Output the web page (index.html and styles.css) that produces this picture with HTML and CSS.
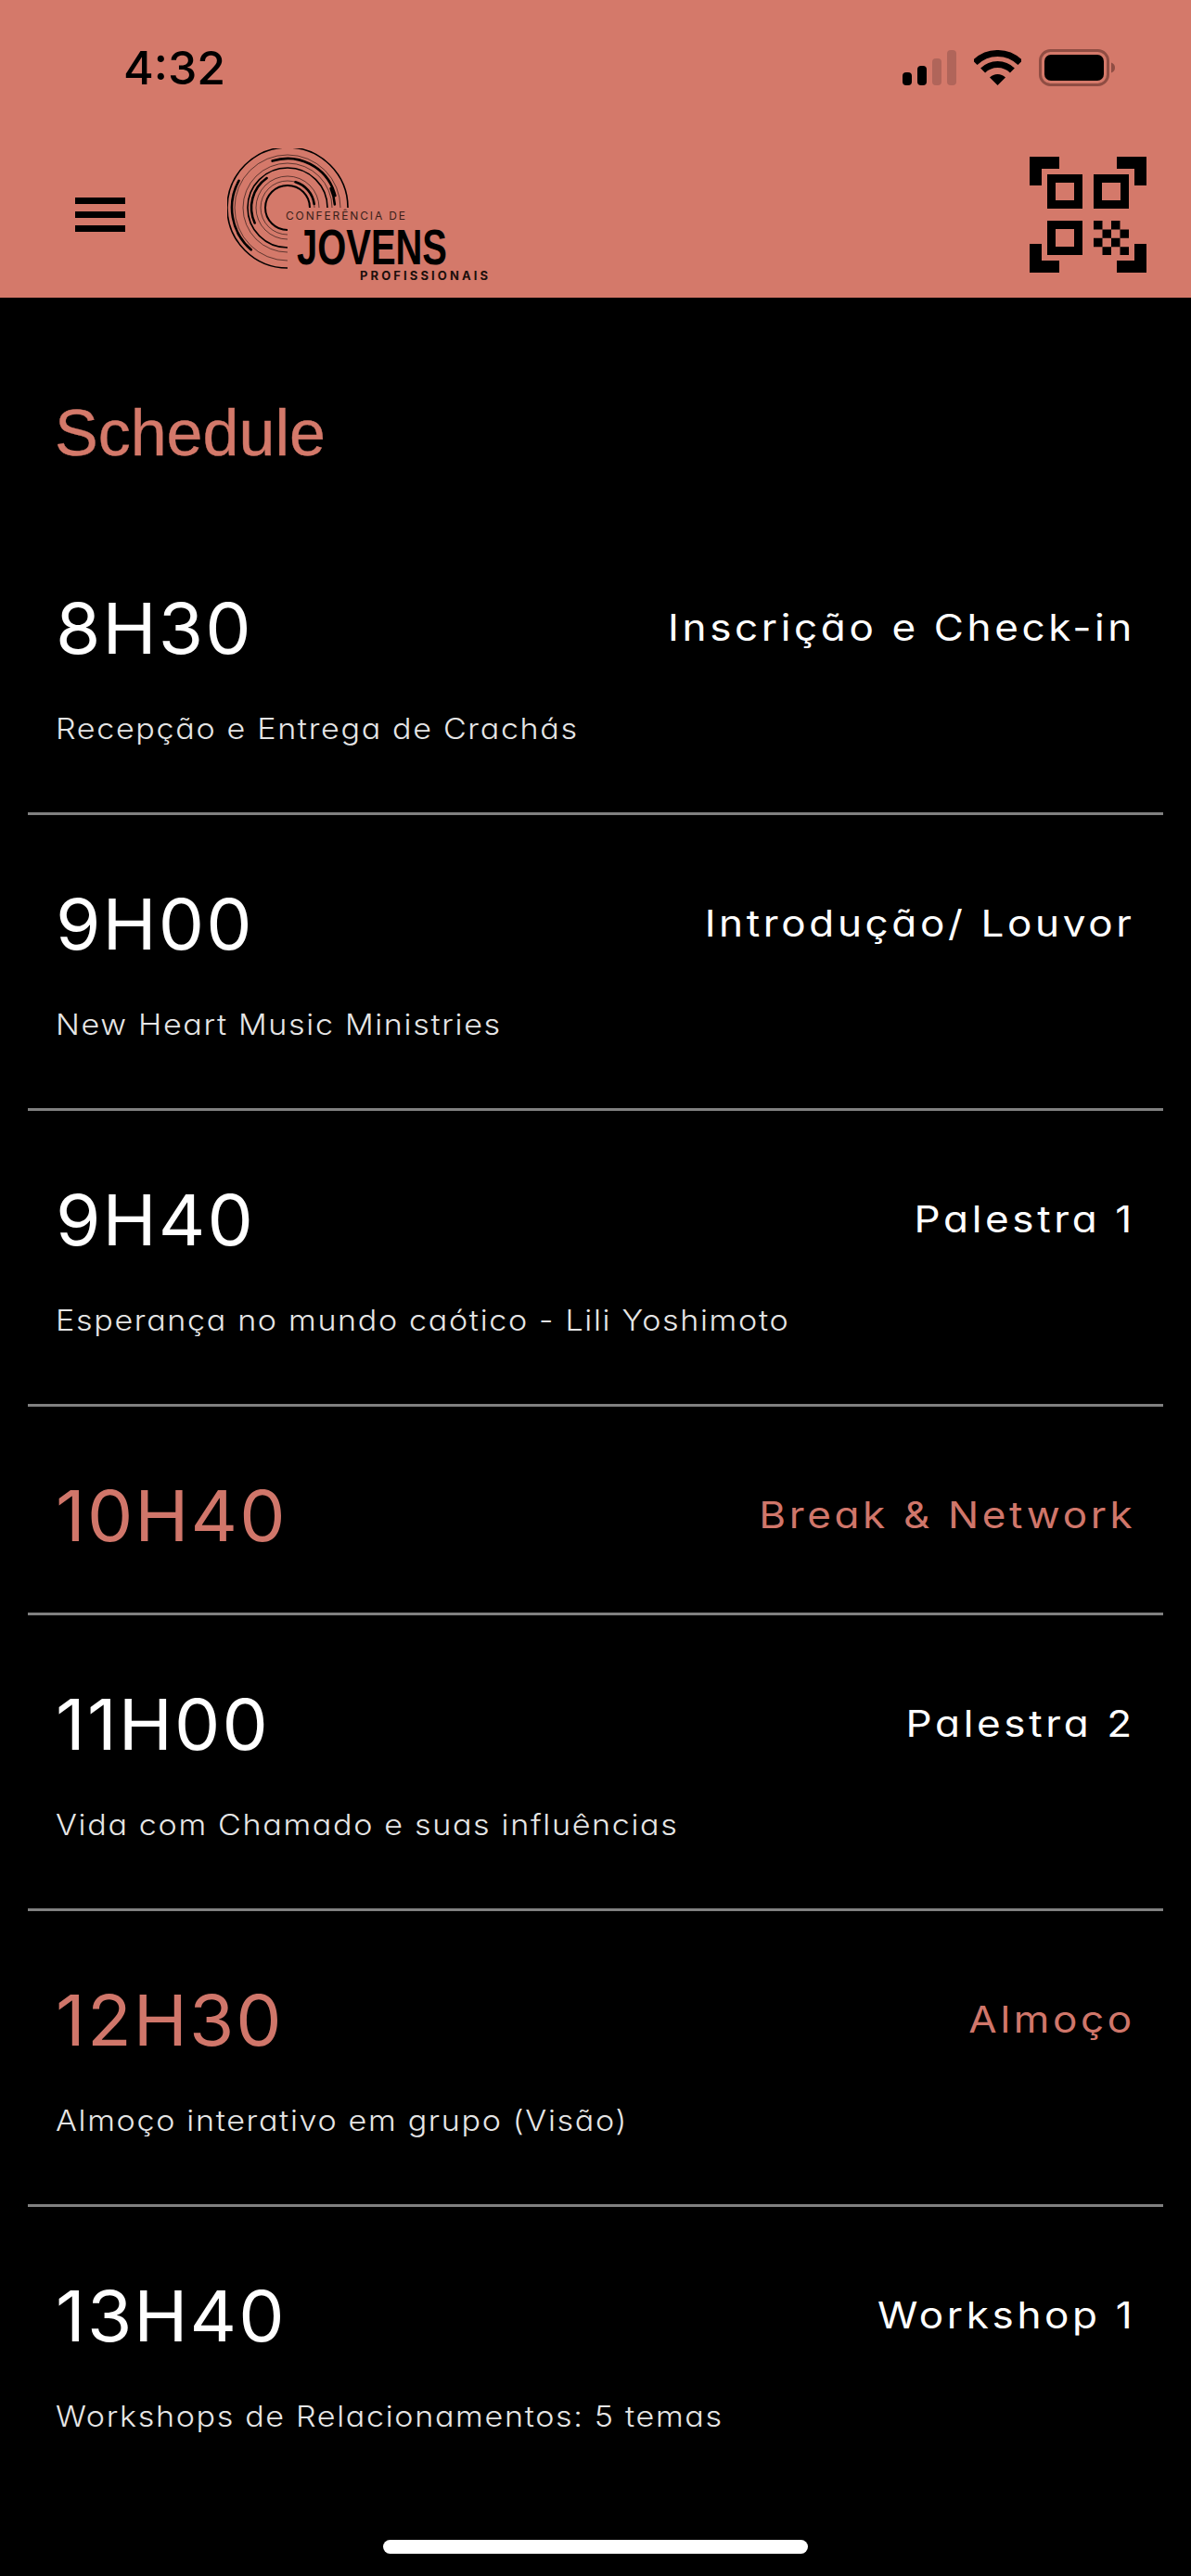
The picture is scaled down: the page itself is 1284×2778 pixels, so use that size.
FILE: index.html
```html
<!DOCTYPE html>
<html lang="pt">
<head>
    <meta charset="UTF-8">
    <meta name="viewport" content="width=device-width, initial-scale=1.0">
    <title>Schedule</title>
    <link rel="stylesheet" href="styles.css">
</head>
<body>
    <header class="app-header">
        <!-- Status bar -->
        <div class="status-bar">
            <span class="status-time">4:32</span>
            <div class="status-icons">
                <svg width="58" height="38" viewBox="0 0 58 38">
                    <rect x="0" y="24" width="10" height="14" rx="4"/>
                    <rect x="16" y="17" width="10" height="21" rx="4"/>
                    <rect class="dim" x="32" y="9" width="10" height="29" rx="4"/>
                    <rect class="dim" x="48" y="0" width="10" height="38" rx="4"/>
                </svg>
                <svg width="51" height="38" viewBox="0 0 51 38">
                    <path class="wifi-band" d="M1.1 13.6A34.5 34.5 0 0 1 49.9 13.6"/>
                    <path class="wifi-band" d="M9.6 22.1A22.5 22.5 0 0 1 41.4 22.1"/>
                    <path d="M25.5 38L17 29.5A12 12 0 0 1 34 29.5Z"/>
                </svg>
                <svg width="82" height="40" viewBox="0 0 82 40">
                    <rect class="battery-shell" x="1.5" y="1.5" width="73" height="37" rx="11"/>
                    <rect x="6" y="6" width="64" height="28" rx="7"/>
                    <path class="battery-cap" d="M78 14.500C81 15.500 82 17.500 82 20C82 22.500 81 24.500 78 25.500Z"/>
                </svg>
            </div>
        </div>

        <!-- Nav row -->
        <div class="nav-bar">
            <div class="menu-icon"><span></span><span></span><span></span></div>
            <svg class="logo" width="285" height="146" viewBox="0 0 285 146">
                <g class="logo-rings" transform="translate(65 64)">
                    <circle class="ring-thin" r="65" pathLength="360" stroke-dasharray="270 90" transform="rotate(90)"/>
                    <circle class="ring-faint" r="57" pathLength="360" stroke-dasharray="270 90" transform="rotate(90)"/>
                    <circle class="ring-faint" r="48" pathLength="360" stroke-dasharray="270 90" transform="rotate(90)"/>
                    <circle class="ring-thin" r="43" pathLength="360" stroke-dasharray="270 90" transform="rotate(90)"/>
                    <circle class="ring-faint" r="34" pathLength="360" stroke-dasharray="270 90" transform="rotate(90)"/>
                    <circle class="ring-faint" r="29" pathLength="360" stroke-dasharray="270 90" transform="rotate(90)"/>
                    <circle class="ring-mid" r="24" pathLength="360" stroke-dasharray="270 90" transform="rotate(90)"/>
                    <circle class="ring-bold" r="53" pathLength="360" stroke-dasharray="94 360" transform="rotate(252)"/>
                    <circle class="ring-bold" r="60" pathLength="360" stroke-dasharray="78 360" transform="rotate(131)"/>
                    <circle class="ring-bold" r="39" pathLength="360" stroke-dasharray="80 360" transform="rotate(155)"/>
                    <circle class="ring-bold" r="29" pathLength="360" stroke-dasharray="65 360" transform="rotate(287)"/>
                    <circle class="ring-bold" r="51" pathLength="360" stroke-dasharray="20 360" transform="rotate(336)"/>
                </g>
                <text class="logo-small" x="63" y="77" textLength="129" lengthAdjust="spacing">CONFERÊNCIA DE</text>
                <text class="logo-main" x="75" y="125" textLength="162" lengthAdjust="spacingAndGlyphs">JOVENS</text>
                <text class="logo-sub" x="143" y="142" textLength="138" lengthAdjust="spacing">PROFISSIONAIS</text>
            </svg>
            <svg class="qr-icon" width="126" height="125" viewBox="0 0 126 125">
                <path d="M0 0H32V13H13V31H0ZM126 0H94V13H113V31H126ZM0 125H32V112H13V94H0ZM126 125H94V112H113V94H126Z"/>
                <path fill-rule="evenodd" d="M19 19H57V56H19ZM28 28V47H48V28ZM69 19H107V56H69ZM78 28V47H98V28ZM19 69H57V106H19ZM28 78V97H48V78Z"/>
                <path d="M69 69H78.500V78.400H69ZM88 69H97.500V78.400H88ZM78.500 78.400H88V87.800H78.500ZM97.500 78.400H107V87.800H97.500ZM69 87.800H78.500V97.200H69ZM88 87.800H97.500V97.200H88ZM78.500 97.200H88V106H78.500ZM97.500 97.200H107V106H97.500Z"/>
            </svg>
        </div>
    </header>

    <main class="schedule">
        <h1 class="schedule-title">Schedule</h1>

        <ul class="schedule-list">
            <li class="slot">
                <div class="slot-head"><span class="slot-time">8H30</span><span class="slot-name">Inscrição e Check-in</span></div>
                <p class="slot-desc">Recepção e Entrega de Crachás</p>
            </li>
            <li class="slot">
                <div class="slot-head"><span class="slot-time">9H00</span><span class="slot-name">Introdução/ Louvor</span></div>
                <p class="slot-desc">New Heart Music Ministries</p>
            </li>
            <li class="slot">
                <div class="slot-head"><span class="slot-time">9H40</span><span class="slot-name">Palestra 1</span></div>
                <p class="slot-desc">Esperança no mundo caótico - Lili Yoshimoto</p>
            </li>
            <li class="slot slot-break">
                <div class="slot-head"><span class="slot-time">10H40</span><span class="slot-name">Break &amp; Network</span></div>
            </li>
            <li class="slot">
                <div class="slot-head"><span class="slot-time">11H00</span><span class="slot-name">Palestra 2</span></div>
                <p class="slot-desc">Vida com Chamado e suas influências</p>
            </li>
            <li class="slot slot-accent">
                <div class="slot-head"><span class="slot-time">12H30</span><span class="slot-name">Almoço</span></div>
                <p class="slot-desc">Almoço interativo em grupo (Visão)</p>
            </li>
            <li class="slot slot-last">
                <div class="slot-head"><span class="slot-time">13H40</span><span class="slot-name">Workshop 1</span></div>
                <p class="slot-desc">Workshops de Relacionamentos: 5 temas</p>
            </li>
        </ul>
    </main>

    <div class="home-indicator"></div>
</body>
</html>
```

FILE: styles.css
```css
* {
    box-sizing: border-box;
}

body {
    margin: 0;
    height: 2778px;
    overflow: hidden;
    background: #000;
    color: #fff;
    font-family: Inter, "Noto Sans", sans-serif;
}

/* header */
.app-header {
    height: 321px;
    background: #d4796a;
    color: #000;
}

.status-bar {
    height: 146px;
    padding: 0 82px 0 133px;
    display: flex;
    align-items: center;
    justify-content: space-between;
}

.status-time {
    font-size: 50px;
    font-weight: 500;
    line-height: 1;
}

.status-icons {
    display: flex;
    align-items: center;
    gap: 19px;
}

.dim {
    fill: #b0655a;
}

.wifi-band {
    fill: none;
    stroke: #000;
    stroke-width: 7;
}

.battery-shell {
    fill: none;
    stroke: #8f4d43;
    stroke-width: 3;
}

.battery-cap {
    fill: #8f4d43;
}

.nav-bar {
    height: 171px;
    padding: 0 48px 0 81px;
    display: flex;
    align-items: center;
}

.menu-icon {
    width: 54px;
    display: flex;
    flex-direction: column;
    gap: 8px;
}

.menu-icon span {
    height: 7px;
    background: #000;
}

.logo {
    margin: 3px 0 0 110px;
}

.logo-rings circle {
    fill: none;
    stroke: #000;
}

.ring-thin {
    stroke-width: 1.6;
}

.ring-faint {
    stroke-width: 1;
    opacity: 0.55;
}

.ring-mid {
    stroke-width: 2;
}

.ring-bold {
    stroke-width: 2.6;
    stroke-linecap: round;
}

.logo-small {
    font-family: Inter, sans-serif;
    font-size: 12px;
    fill: #3a1e19;
}

.logo-main {
    font-family: "Liberation Sans", sans-serif;
    font-size: 53px;
    font-weight: 700;
}

.logo-sub {
    font-family: Inter, sans-serif;
    font-size: 13px;
    font-weight: 700;
    fill: #1c0f0c;
}

.qr-icon {
    margin-left: auto;
}

/* schedule */
.schedule-title {
    margin: 0;
    padding: 106px 0 0 59px;
    font-family: "Liberation Sans", Arial, sans-serif;
    font-size: 70px;
    font-weight: 400;
    line-height: 80px;
    color: #d4796a;
    -webkit-text-stroke: 0.4px #d4796a;
}

.schedule-list {
    list-style: none;
    margin: 53px 30px 0;
    padding: 0;
}

.slot {
    padding: 72px 30px 70px;
    border-bottom: 3px solid #808080;
}

.slot-break {
    padding-bottom: 60px;
}

.slot-last {
    border-bottom: none;
}

.slot-head {
    height: 90px;
    display: flex;
    align-items: center;
    justify-content: space-between;
    font-feature-settings: "cv11";
}

/* the reference face is wider than anything installed, so stretch it a bit */
.slot-time {
    font-size: 76px;
    font-weight: 400;
    letter-spacing: 2px;
    transform: scaleX(1.03);
    transform-origin: left center;
}

.slot-name {
    margin-bottom: 2px;
    font-size: 39px;
    font-weight: 400;
    letter-spacing: 3.2px;
    transform: scaleX(1.13);
    transform-origin: right center;
}

.slot-desc {
    margin: 44px 0 0;
    font-size: 31px;
    font-weight: 300;
    line-height: 40px;
    letter-spacing: 1.5px;
    color: #e6e6e6;
    font-feature-settings: "cv11";
    transform: scaleX(1.1);
    transform-origin: left center;
}

.slot-break .slot-time,
.slot-break .slot-name,
.slot-accent .slot-time,
.slot-accent .slot-name {
    color: #d0766a;
}

.home-indicator {
    position: absolute;
    left: 413px;
    top: 2739px;
    width: 458px;
    height: 15px;
    border-radius: 8px;
    background: #fff;
}
```
